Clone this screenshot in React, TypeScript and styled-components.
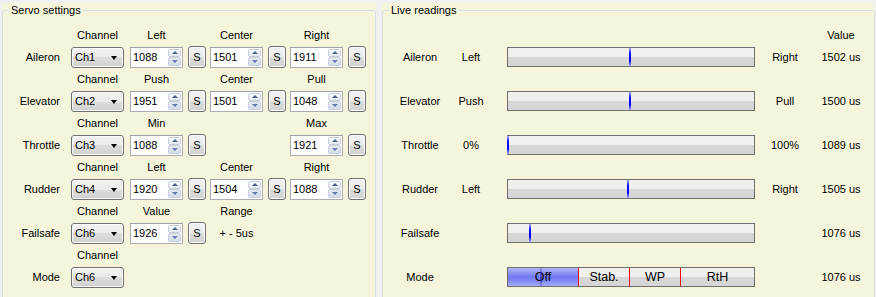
import React from 'react'
import styled, { createGlobalStyle, css } from 'styled-components'

const GlobalStyle = createGlobalStyle`
  html, body {
    margin: 0;
    padding: 0;
    background: #f0f0f0;
    overflow: hidden;
  }
  body {
    font-family: 'Liberation Sans', Arial, sans-serif;
    font-size: 11px;
    color: #000;
  }
`

const Page = styled.div`
  display: flex;
  gap: 6px;
  padding: 3px 0 0 2px;
  height: 297px;
  box-sizing: border-box;
  overflow: hidden;
`

const Panel = styled.div<{ $width: number }>`
  width: ${(p) => p.$width}px;
  height: 320px;
  flex-shrink: 0;
  background: #f5f5dc;
`

const Frame = styled.fieldset`
  box-sizing: border-box;
  height: 100%;
  margin: 0;
  padding: 0;
  min-width: 0;
  border: 1px solid #d5dfe5;
  border-radius: 3px;
`

const Title = styled.legend`
  margin-left: 6px;
  padding: 0 2px;
  line-height: 14px;
`

/* ---------- servo settings ---------- */

const ServoList = styled.div`
  display: flex;
  flex-direction: column;
  gap: 2px;
  padding: 10px 0 0 5px;
`

const ServoBlock = styled.div`
  display: grid;
  grid-template-columns: 63px 59px 58px 22px 58px 22px 58px 18px;
  grid-template-rows: 16px 24px;
  row-gap: 2px;
  align-items: center;
  justify-items: start;
`

const ColHead = styled.span<{ $col: number }>`
  grid-row: 1;
  grid-column: ${(p) => p.$col};
  width: 53px;
  text-align: center;
  line-height: 16px;
`

const RowName = styled.span`
  grid-row: 2;
  grid-column: 1;
  justify-self: end;
  padding-right: 11px;
`

const Cell = styled.div<{ $col: number }>`
  grid-row: 2;
  grid-column: ${(p) => p.$col};
  display: flex;
`

const Note = styled(Cell)`
  width: 53px;
  justify-content: center;
`

const winButton = css`
  box-sizing: border-box;
  border: 1px solid #707070;
  border-radius: 3px;
  background: linear-gradient(#f3f3f3 0%, #ebebeb 50%, #dddddd 50%, #d1d1d1 100%);
  box-shadow: inset 0 0 0 1px #fbfbfb;
`

const Combo = styled.div`
  ${winButton};
  width: 53px;
  height: 21px;
  display: flex;
  align-items: center;
  justify-content: space-between;
  padding: 0 6px 0 3px;
`

const ComboArrow = styled.span`
  width: 0;
  height: 0;
  border-left: 3px solid transparent;
  border-right: 3px solid transparent;
  border-top: 4px solid #000;
  margin-top: 1px;
`

const SButton = styled.button`
  ${winButton};
  width: 18px;
  height: 22px;
  padding: 0;
  font: inherit;
  color: #000;
`

const Spin = styled.div`
  box-sizing: border-box;
  width: 53px;
  height: 21px;
  border: 1px solid #abadb3;
  border-top-color: #9fa2a9;
  background: #fff;
  display: flex;
  padding: 1px;
`

const SpinValue = styled.span`
  flex: 1;
  padding-left: 1px;
  line-height: 17px;
`

const SpinButtons = styled.div`
  width: 13px;
  display: flex;
  flex-direction: column;
`

const SpinHalf = styled.div<{ $down?: boolean }>`
  flex: 1;
  box-sizing: border-box;
  border: 1px solid #c6d0dc;
  border-radius: 2px;
  background: ${(p) =>
    p.$down ? 'linear-gradient(#e4eaf2, #d6dee9)' : 'linear-gradient(#f8f9fb, #e6ebf1)'};
  display: flex;
  align-items: center;
  justify-content: center;

  &::after {
    content: '';
    width: 0;
    height: 0;
    border-left: 3px solid transparent;
    border-right: 3px solid transparent;
    ${(p) => (p.$down ? 'border-top: 3px solid #5b78a8;' : 'border-bottom: 3px solid #4d6388;')}
  }
`

/* ---------- live readings ---------- */

const readingColumns = css`
  display: grid;
  grid-template-columns: 60px 42px 263px 60px 52px;
  align-items: center;
  justify-items: center;
`

const ReadingsBody = styled.div`
  padding: 10px 0 0 7px;
`

const ReadingHeader = styled.div`
  ${readingColumns};
  height: 16px;
  margin-bottom: 2px;
`

const ReadingList = styled.div`
  display: flex;
  flex-direction: column;
  gap: 20px;
`

const ReadingRow = styled.div`
  ${readingColumns};
  height: 24px;
`

const Track = styled.div`
  position: relative;
  justify-self: end;
  box-sizing: border-box;
  width: 248px;
  height: 20px;
  border: 1px solid #6f6f6f;
  background: linear-gradient(#f0f0f0 50%, #d6d6d6 50%);
`

const ModeTrack = styled(Track)`
  display: flex;
`

const Marker = styled.div<{ $dim?: boolean }>`
  position: absolute;
  top: 0;
  bottom: 0;
  width: 2px;
  margin-left: -1px;
  background: ${(p) =>
    p.$dim
      ? 'linear-gradient(rgba(40,30,160,0.2), rgba(40,30,160,0.55) 40%, rgba(40,30,160,0.55) 60%, rgba(40,30,160,0.2))'
      : 'linear-gradient(#a8a8ff, #1010ff 30%, #0000ff 70%, #a8a8ff)'};
`

const ModeSeg = styled.div<{ $w: number; $active?: boolean; $first?: boolean }>`
  box-sizing: border-box;
  width: ${(p) => p.$w}px;
  display: flex;
  align-items: center;
  justify-content: center;
  font-size: 12.5px;
  border-left: ${(p) => (p.$first ? 'none' : '1px solid #ff0000')};
  background: ${(p) =>
    p.$active
      ? 'linear-gradient(#b0b6fb 0%, #8a92f5 30%, #6e77f0 50%, #868ef4 75%, #a4abf8 100%)'
      : 'transparent'};
`

type Column = { head: string; value?: number; text?: string } | null

const servos: { name: string; channel: string; cols: Column[] }[] = [
  { name: 'Aileron', channel: 'Ch1', cols: [{ head: 'Left', value: 1088 }, { head: 'Center', value: 1501 }, { head: 'Right', value: 1911 }] },
  { name: 'Elevator', channel: 'Ch2', cols: [{ head: 'Push', value: 1951 }, { head: 'Center', value: 1501 }, { head: 'Pull', value: 1048 }] },
  { name: 'Throttle', channel: 'Ch3', cols: [{ head: 'Min', value: 1088 }, null, { head: 'Max', value: 1921 }] },
  { name: 'Rudder', channel: 'Ch4', cols: [{ head: 'Left', value: 1920 }, { head: 'Center', value: 1504 }, { head: 'Right', value: 1088 }] },
  { name: 'Failsafe', channel: 'Ch6', cols: [{ head: 'Value', value: 1926 }, { head: 'Range', text: '+ - 5us' }, null] },
  { name: 'Mode', channel: 'Ch6', cols: [null, null, null] },
]

const readings = [
  { name: 'Aileron', low: 'Left', high: 'Right', pos: 0.496, value: '1502 us' },
  { name: 'Elevator', low: 'Push', high: 'Pull', pos: 0.496, value: '1500 us' },
  { name: 'Throttle', low: '0%', high: '100%', pos: 0.002, value: '1089 us' },
  { name: 'Rudder', low: 'Left', high: 'Right', pos: 0.488, value: '1505 us' },
  { name: 'Failsafe', low: '', high: '', pos: 0.09, value: '1076 us' },
]

const modes = [
  { label: 'Off', w: 70 },
  { label: 'Stab.', w: 51 },
  { label: 'WP', w: 51 },
  { label: 'RtH', w: 74 },
]

function Spinner({ value }: { value: number }) {
  return (
    <Spin>
      <SpinValue>{value}</SpinValue>
      <SpinButtons>
        <SpinHalf />
        <SpinHalf $down />
      </SpinButtons>
    </Spin>
  )
}

function ServoRow({ name, channel, cols }: { name: string; channel: string; cols: Column[] }) {
  return (
    <ServoBlock>
      <ColHead $col={2}>Channel</ColHead>
      <RowName>{name}</RowName>
      <Cell $col={2}>
        <Combo>
          {channel}
          <ComboArrow />
        </Combo>
      </Cell>
      {cols.map((c, i) => {
        if (!c) return null
        const col = 3 + i * 2
        return (
          <React.Fragment key={i}>
            <ColHead $col={col}>{c.head}</ColHead>
            {c.text ? (
              <Note $col={col}>{c.text}</Note>
            ) : (
              <>
                <Cell $col={col}>
                  <Spinner value={c.value!} />
                </Cell>
                <Cell $col={col + 1}>
                  <SButton>S</SButton>
                </Cell>
              </>
            )}
          </React.Fragment>
        )
      })}
    </ServoBlock>
  )
}

export default function App() {
  return (
    <>
      <GlobalStyle />
      <Page>
        <Panel $width={374}>
          <Frame>
            <Title>Servo settings</Title>
            <ServoList>
              {servos.map((s) => (
                <ServoRow key={s.name} {...s} />
              ))}
            </ServoList>
          </Frame>
        </Panel>
        <Panel $width={493}>
          <Frame>
            <Title>Live readings</Title>
            <ReadingsBody>
              <ReadingHeader>
                <span style={{ gridColumn: 5 }}>Value</span>
              </ReadingHeader>
              <ReadingList>
                {readings.map((r) => (
                  <ReadingRow key={r.name}>
                    <span>{r.name}</span>
                    <span>{r.low}</span>
                    <Track>
                      <Marker style={{ left: `${r.pos * 100}%` }} />
                    </Track>
                    <span>{r.high}</span>
                    <span>{r.value}</span>
                  </ReadingRow>
                ))}
                <ReadingRow>
                  <span>Mode</span>
                  <span />
                  <ModeTrack>
                    {modes.map((m, i) => (
                      <ModeSeg key={m.label} $w={m.w} $active={i === 0} $first={i === 0}>
                        {m.label}
                      </ModeSeg>
                    ))}
                    <Marker $dim style={{ left: '13.6%' }} />
                  </ModeTrack>
                  <span />
                  <span>1076 us</span>
                </ReadingRow>
              </ReadingList>
            </ReadingsBody>
          </Frame>
        </Panel>
      </Page>
    </>
  )
}
